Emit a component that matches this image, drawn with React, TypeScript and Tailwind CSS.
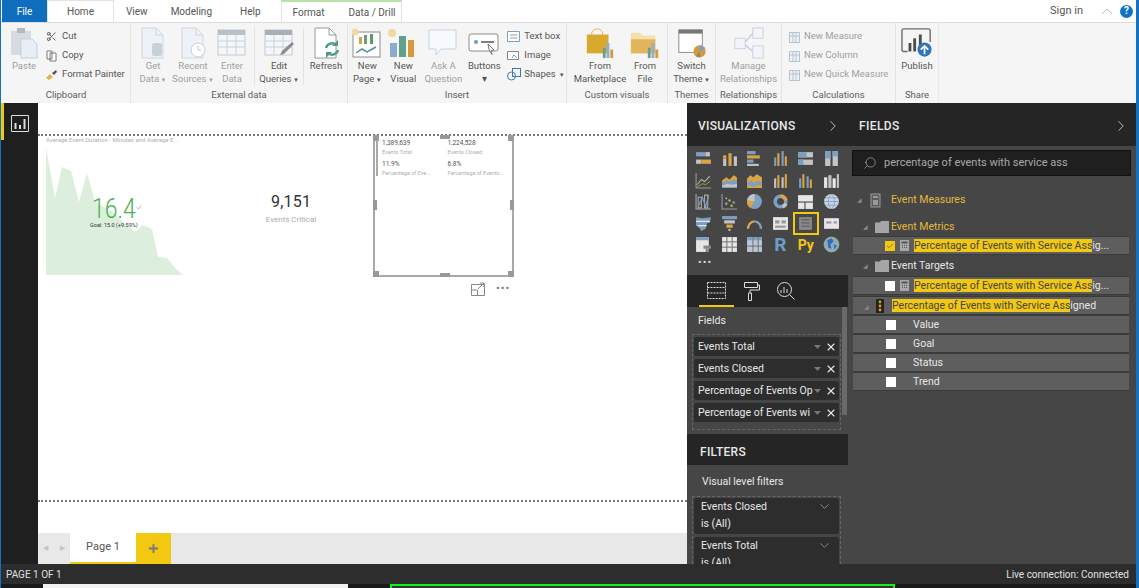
import React from 'react';
import { Check, ChevronDown, ChevronRight, Plus, Scissors, Search, X } from 'lucide-react';

const G = '#d9a441';
const B = '#7f9fc2';
const L = '#c4c4c4';
const W = '#e6e6e6';

type R = [number, number, number, number, string];

const bars: Record<string, R[]> = {
  a: [[1, 2, 9, 4, B], [10, 2, 4, 4, L], [1, 9, 5, 4, L], [6, 9, 9, 4, G]],
  b: [[2, 8, 3, 7, L], [2, 5, 3, 3, G], [7, 3, 3, 12, G], [12, 6, 3, 9, L]],
  c: [[1, 1, 8, 3, B], [1, 5, 12, 3, G], [1, 9, 6, 3, B], [1, 13, 11, 2, L]],
  d: [[2, 7, 2, 8, B], [5, 3, 2, 12, G], [9, 1, 2, 14, B], [12, 6, 2, 9, G]],
  e: [[1, 2, 14, 5, L], [1, 2, 8, 5, B], [1, 9, 14, 5, L], [1, 9, 5, 5, B]],
  f: [[2, 1, 5, 14, L], [2, 1, 5, 7, B], [9, 1, 5, 14, L], [9, 1, 5, 5, B]],
  h: [[2, 6, 2, 9, L], [5, 3, 2, 12, G], [9, 5, 2, 10, L], [12, 2, 2, 13, G]],
  i: [[2, 6, 2, 9, B], [5, 2, 2, 13, G], [9, 4, 2, 11, B], [12, 7, 2, 8, G]],
  j: [[1, 5, 3, 10, W], [5, 3, 3, 12, L], [9, 6, 3, 9, W], [13, 2, 2, 13, L]],
  k: [[1, 2, 14, 6, W], [1, 9, 6, 6, W], [8, 9, 7, 6, W]],
  l: [[1, 1, 14, 3, B], [3, 5, 10, 3, L], [5, 9, 6, 3, G], [7, 13, 2, 2, L]],
  m: [[1, 2, 14, 12, W], [3, 5, 4, 3, '#999'], [9, 5, 4, 3, '#999'], [3, 10, 10, 2, '#999']],
  n: [[2, 2, 12, 12, '#8a8a8a'], [4, 4, 8, 1, '#5a5a5a'], [4, 7, 8, 1, '#5a5a5a'], [4, 10, 8, 1, '#5a5a5a']],
  o: [[1, 3, 14, 10, W], [3, 6, 5, 2, '#999'], [10, 6, 3, 2, B]],
  p: [[1, 1, 12, 14, W], [1, 1, 12, 3, B], [8, 9, 7, 3, '#888'], [10, 12, 3, 3, '#888']],
  q: [[1, 1, 14, 14, W], [5, 1, 1, 14, '#777'], [10, 1, 1, 14, '#777'], [1, 5, 14, 1, '#777'], [1, 10, 14, 1, '#777']],
  r: [[1, 1, 14, 14, '#b9c7d6'], [1, 1, 14, 3, B], [6, 1, 1, 14, '#777'], [11, 1, 1, 14, '#777'], [1, 9, 14, 1, '#777']],
};

const VizBars = ({ name }: { name: string }) => (
  <svg width="17" height="17" viewBox="0 0 16 16">
    {bars[name].map(([x, y, w, h, c], i) => (
      <rect key={i} x={x} y={y} width={w} height={h} fill={c} />
    ))}
  </svg>
);

const VizShape = ({ children }: { children: React.ReactNode }) => (
  <svg width="17" height="17" viewBox="0 0 16 16" fill="none">
    {children}
  </svg>
);

const vizIcons: React.ReactNode[] = [
  <VizBars name="a" />,
  <VizBars name="b" />,
  <VizBars name="c" />,
  <VizBars name="d" />,
  <VizBars name="e" />,
  <VizBars name="f" />,
  <VizShape>
    <path d="M1 1v14h14" stroke="#999" />
    <path d="M2 12l4-5 3 2 5-5" stroke="#b0b0b0" />
    <path d="M2 14l5-3 3 1 4-3" stroke={G} strokeWidth=".7" />
  </VizShape>,
  <VizShape>
    <path d="M1 8l4-3 3 2 4-4 3 2v10H1z" fill={G} />
    <path d="M1 10l4-2 4 1 3-2 3 1v7H1z" fill={B} />
    <path d="M1 13l5-2 4 1 5-1v3H1z" fill={L} />
  </VizShape>,
  <VizShape>
    <path d="M1 6l3-3 3 2 3-3 5 3v10H1z" fill={G} />
    <path d="M1 10l4-2 3 2 3-2 4 2v3l-4-1-4 2-6-2z" fill={B} />
  </VizShape>,
  <VizBars name="h" />,
  <VizBars name="i" />,
  <VizBars name="j" />,
  <VizShape>
    <path d="M1 1v14h14" stroke="#aaa" />
    <path d="M3 4h3v10H3zM9 2h3v12H9z" stroke="#aaa" />
    <path d="M3 13l4-9 3 9 3-11" stroke={B} />
  </VizShape>,
  <VizShape>
    <path d="M1 1v14h14" stroke="#999" />
    <circle cx="5" cy="10" r="1.2" fill={B} />
    <circle cx="8" cy="7" r="1.2" fill={G} />
    <circle cx="12" cy="9" r="1.2" fill={B} />
    <circle cx="10" cy="12" r="1.2" fill={G} />
    <circle cx="5" cy="5" r=".8" fill={L} />
  </VizShape>,
  <VizShape>
    <circle cx="8" cy="8" r="7" fill={B} />
    <path d="M8 8V1a7 7 0 0 0-7 6z" fill={L} />
    <path d="M8 8L1 7a7 7 0 0 0 3 7z" fill={G} />
  </VizShape>,
  <VizShape>
    <circle cx="8" cy="8" r="5" stroke={B} strokeWidth="3.4" />
    <path d="M8 3a5 5 0 0 1 5 4" stroke={G} strokeWidth="3.4" />
    <path d="M13 10a5 5 0 0 1-3 3" stroke={L} strokeWidth="3.4" />
  </VizShape>,
  <VizBars name="k" />,
  <VizShape>
    <circle cx="8" cy="8" r="7" fill="#c9d4e0" />
    <path d="M1 8h14M8 1c-4 4-4 10 0 14M8 1c4 4 4 10 0 14M2 4.500h12M2 11.500h12" stroke={B} strokeWidth=".8" />
  </VizShape>,
  <VizShape>
    <path d="M1 2l6 1 8-1-1 5-3 1-1 5-4 2-2-3-3-2z" fill={B} />
    <path d="M1 6h13M3 10h8" stroke={W} strokeWidth="1" />
  </VizShape>,
  <VizBars name="l" />,
  <VizShape>
    <path d="M2 13a6.500 6.500 0 0 1 6-7" stroke={G} strokeWidth="2.200" />
    <path d="M8 6a6.500 6.500 0 0 1 6 7" stroke={B} strokeWidth="2.200" />
  </VizShape>,
  <VizBars name="m" />,
  <VizBars name="n" />,
  <VizBars name="o" />,
  <VizBars name="p" />,
  <VizBars name="q" />,
  <VizBars name="r" />,
  <span className="text-[19px] leading-none font-bold text-[#6f9bc8]">R</span>,
  <span className="text-[14px] leading-none font-bold text-[#f2c811]">Py</span>,
  <VizShape>
    <circle cx="8" cy="8" r="7" fill="#8fa9c4" />
    <path d="M4 4l4-2 2 3-3 3 1 4-3-1zM10 8l3 1-2 4z" fill="#2f6fb3" />
    <circle cx="8" cy="8" r="7" stroke="#9bb86f" strokeWidth=".8" />
  </VizShape>,
];

const Doc = ({ children, faded = true }: { children?: React.ReactNode; faded?: boolean }) => (
  <svg width="34" height="32" viewBox="0 0 34 32" fill="none">
    <path
      d="M6 1h14l7 7v23H6z"
      fill={faded ? '#eef2f7' : '#fff'}
      stroke={faded ? '#cfd6e0' : '#9a9a9a'}
    />
    <path d="M20 1v7h7" stroke={faded ? '#cfd6e0' : '#9a9a9a'} />
    {children}
  </svg>
);

const GridIcon = ({ pen = false }: { pen?: boolean }) => (
  <svg width="34" height="32" viewBox="0 0 34 32" fill="none">
    <rect x="3" y="3" width="27" height="25" fill="#f4f6f9" stroke="#c2c9d2" />
    <rect x="3" y="3" width="27" height="5" fill={pen ? '#a9b0b9' : '#b8c0ca'} />
    <path d="M3 14h27M3 20h27M12 8v20M21 8v20" stroke="#cbd2da" />
    {pen && <path d="M18 28l2-4 10-9 2 2-10 10z" fill="#8d8d8d" />}
  </svg>
);

const ribbonIcons: Record<string, React.ReactNode> = {
  paste: (
    <svg width="30" height="32" viewBox="0 0 30 32" fill="none">
      <rect x="2" y="4" width="20" height="24" fill="#d7dbe1" />
      <rect x="8" y="1" width="8" height="5" fill="#b5b9bf" />
      <path d="M12 12h11l5 5v14H12z" fill="#e8eef6" stroke="#c4cfdd" />
    </svg>
  ),
  get: (
    <Doc>
      <rect x="16" y="16" width="10" height="13" rx="2" fill="#c8d0d9" />
    </Doc>
  ),
  recent: (
    <Doc>
      <circle cx="22" cy="23" r="7" fill="#fff" stroke="#c4cedb" />
      <path d="M22 19v4h3" stroke="#b9c4d1" />
    </Doc>
  ),
  enter: <GridIcon />,
  edit: <GridIcon pen />,
  refresh: (
    <Doc faded={false}>
      <path d="M17 21a6 6 0 0 1 10-3M29 23a6 6 0 0 1-10 3" stroke="#4d9c8a" strokeWidth="2.400" />
      <path d="M29 13v6h-6zM17 31v-6h6z" fill="#4d9c8a" />
    </Doc>
  ),
  page: (
    <svg width="34" height="32" viewBox="0 0 34 32" fill="none">
      <rect x="3" y="5" width="27" height="25" fill="#fff" stroke="#8d8d8d" />
      <rect x="9" y="10" width="3" height="7" fill={G} />
      <rect x="14" y="8" width="3" height="9" fill="#6f9a83" />
      <rect x="20" y="7" width="3" height="10" fill="#5c9a66" />
      <path d="M6 26l6-4 5 3 9-5" stroke="#5b8a9e" strokeWidth="1.500" />
      <circle cx="5" cy="5" r="3.500" fill="#f3d9a0" />
    </svg>
  ),
  visual: (
    <svg width="34" height="32" viewBox="0 0 34 32" fill="none">
      <rect x="4" y="16" width="7" height="14" fill="#8caccb" />
      <rect x="13" y="9" width="7" height="21" fill="#5f9f8d" />
      <rect x="22" y="13" width="6" height="17" fill="#d79a3a" />
      <circle cx="6" cy="6" r="4" fill="#f3d9a0" />
    </svg>
  ),
  ask: (
    <svg width="34" height="32" viewBox="0 0 34 32" fill="none">
      <path d="M3 3h27v19H15l-5 6v-6H3z" fill="#f6f9fd" stroke="#c8d3e0" />
    </svg>
  ),
  buttons: (
    <svg width="34" height="32" viewBox="0 0 34 32" fill="none">
      <rect x="2" y="7" width="29" height="17" rx="2" fill="#fff" stroke="#8c8c8c" />
      <circle cx="9" cy="15" r="2" fill="#6f9bc8" />
      <path d="M14 15h13" stroke="#555" strokeWidth="1.500" />
      <path d="M21 17l6 6-3 .5 1 4-3-5z" fill="#fff" stroke="#777" />
    </svg>
  ),
  market: (
    <svg width="34" height="32" viewBox="0 0 34 34" fill="none">
      <path d="M8 8c0-8 12-8 12 0" stroke="#e0b34c" />
      <path d="M3 8h23v20H3z" fill="#d9a92f" />
      <rect x="20" y="22" width="3" height="11" fill="#6e9e8b" />
      <rect x="24" y="17" width="3" height="16" fill="#8fb0cc" />
      <rect x="28" y="24" width="3" height="9" fill="#d79a3a" />
    </svg>
  ),
  file: (
    <svg width="34" height="32" viewBox="0 0 34 34" fill="none">
      <path d="M2 6h10l3 3h13v19H2z" fill="#f4dfae" />
      <path d="M2 13h26v15H2z" fill="#e3b65c" />
      <rect x="20" y="22" width="3" height="11" fill="#6e9e8b" />
      <rect x="24" y="17" width="3" height="16" fill="#8fb0cc" />
      <rect x="28" y="24" width="3" height="9" fill="#d79a3a" />
    </svg>
  ),
  theme: (
    <svg width="34" height="32" viewBox="0 0 34 34" fill="none">
      <rect x="3" y="3" width="25" height="24" fill="#fff" stroke="#8a8a8a" />
      <rect x="3" y="3" width="25" height="4" fill="#777" />
      <circle cx="25" cy="26" r="6.500" fill="#d79a3a" />
      <path d="M25 26v-6.500a6.500 6.500 0 0 1 6 4z" fill="#7f9fc2" />
      <path d="M25 26l-4 5a6.500 6.500 0 0 0 5 1z" fill="#7d8f86" />
    </svg>
  ),
  manage: (
    <svg width="34" height="32" viewBox="0 0 36 34" fill="none">
      <rect x="3" y="12" width="11" height="11" fill="#f1f4f8" stroke="#c9d2dd" />
      <rect x="22" y="1" width="11" height="11" fill="#f1f4f8" stroke="#c9d2dd" />
      <rect x="22" y="20" width="11" height="13" fill="#f1f4f8" stroke="#c9d2dd" />
      <path d="M14 16l8-9M14 19l8 7" stroke="#bcd0e4" strokeWidth="1.500" />
    </svg>
  ),
  publish: (
    <svg width="32" height="32" viewBox="0 0 34 34" fill="none">
      <path d="M7 26H3a2 2 0 0 1-2-2V4a2 2 0 0 1 2-2h26a2 2 0 0 1 2 2v12" stroke="#6d6d6d" strokeWidth="1.500" />
      <rect x="8" y="17" width="3" height="9" fill="#4d4d4d" />
      <rect x="13" y="12" width="3" height="14" fill="#4d4d4d" />
      <rect x="19" y="8" width="3" height="14" fill="#4d4d4d" />
      <circle cx="25" cy="24" r="7.500" fill="#2f76b8" />
      <path d="M25 29v-9M21 24l4-4 4 4" stroke="#fff" strokeWidth="1.800" />
    </svg>
  ),
};

const Large = ({
  icon,
  label,
  caret = false,
  faded = false,
  w,
}: {
  icon: string;
  label: string[];
  caret?: boolean;
  faded?: boolean;
  w: string;
}) => (
  <div className={`flex shrink-0 flex-col items-center ${w}`}>
    <div className="flex h-[33px] items-start justify-center">{ribbonIcons[icon]}</div>
    <div
      className={`text-center text-[9.500px] leading-[12.5px] whitespace-nowrap ${faded ? 'text-[#a0a0a0]' : 'text-[#555]'}`}
    >
      {label.map((line, i) => (
        <div key={line}>
          {line}
          {caret && i === label.length - 1 && <span className="text-[6px]"> ▼</span>}
        </div>
      ))}
    </div>
  </div>
);

const Small = ({
  icon,
  label,
  faded = false,
}: {
  icon: React.ReactNode;
  label: React.ReactNode;
  faded?: boolean;
}) => (
  <div
    className={`flex h-[19px] items-center gap-[3px] text-[9.500px] whitespace-nowrap ${faded ? 'text-[#a0a0a0]' : 'text-[#555]'}`}
  >
    <span className="flex w-[15px] shrink-0 justify-center">{icon}</span>
    {label}
  </div>
);

const Group = ({
  title,
  w,
  children,
  left = false,
}: {
  title: string;
  w: string;
  children: React.ReactNode;
  left?: boolean;
}) => (
  <div className={`flex h-full shrink-0 flex-col border-r border-[#e4e4e4] ${w}`}>
    <div className={`flex h-[66px] items-start pt-[4px] ${left ? 'justify-start' : 'justify-center'}`}>{children}</div>
    <div className="text-center text-[9.500px] leading-[12px] text-[#606060]">{title}</div>
  </div>
);

const Ribbon = () => (
  <div className="flex h-[81px] shrink-0 border-t border-[#dcdcdc] bg-[#f5f5f5] pl-px">
    <Group title="Clipboard" w="w-[129px]" left>
      <div className="ml-[7px] flex gap-[5px]">
        <Large icon="paste" label={['Paste']} faded w="w-[30px]" />
        <div className="flex flex-col">
          <Small icon={<Scissors size={11} className="text-[#555]" />} label="Cut" />
          <Small
            icon={
              <svg width="11" height="12" viewBox="0 0 11 12" fill="none" stroke="#777">
                <path d="M1 1h5v8H1zM4 3h6v8H4z" fill="#fff" />
              </svg>
            }
            label="Copy"
          />
          <Small
            icon={
              <svg width="13" height="11" viewBox="0 0 13 11">
                <path d="M1 9l4-4 3 3-4 3z" fill="#e0b34c" />
                <path d="M7 4l4-3 1 2-3 3z" fill="#555" />
              </svg>
            }
            label="Format Painter"
          />
        </div>
      </div>
    </Group>
    <Group title="External data" w="w-[217px]">
      <div className="flex">
        <Large icon="get" label={['Get', 'Data']} caret faded w="w-[40px]" />
        <Large icon="recent" label={['Recent', 'Sources']} caret faded w="w-[40px]" />
        <Large icon="enter" label={['Enter', 'Data']} faded w="w-[38px]" />
        <div className="mx-[3px] h-[58px] border-l border-[#e2e2e2]" />
        <Large icon="edit" label={['Edit', 'Queries']} caret w="w-[42px]" />
        <div className="mx-[3px] h-[58px] border-l border-[#e2e2e2]" />
        <Large icon="refresh" label={['Refresh']} w="w-[38px]" />
      </div>
    </Group>
    <Group title="Insert" w="w-[219px]">
      <div className="flex">
        <Large icon="page" label={['New', 'Page']} caret w="w-[36px]" />
        <Large icon="visual" label={['New', 'Visual']} w="w-[36px]" />
        <Large icon="ask" label={['Ask A', 'Question']} faded w="w-[44px]" />
        <Large icon="buttons" label={['Buttons', '▾']} w="w-[38px]" />
        <div className="ml-[3px] flex flex-col">
          <Small
            icon={
              <svg width="13" height="11" viewBox="0 0 13 11" fill="#fff" stroke="#7f9fc2">
                <path d="M.5.500h12v10H.500z" />
                <path d="M3 4h7M3 7h7" stroke="#999" />
              </svg>
            }
            label="Text box"
          />
          <Small
            icon={
              <svg width="14" height="13" viewBox="0 0 14 13" fill="#fff" stroke="#888">
                <path d="M.5 2.500h11v8H.500z" />
                <path d="M5 9l2-3 3 3" stroke="#7f9fc2" />
              </svg>
            }
            label="Image"
          />
          <Small
            icon={
              <svg width="14" height="13" viewBox="0 0 14 13" fill="none" stroke="#3f78b5">
                <rect x="5.500" y=".5" width="8" height="8" />
                <circle cx="4.500" cy="8" r="4" />
              </svg>
            }
            label={
              <>
                Shapes <span className="text-[6px]">▼</span>
              </>
            }
          />
        </div>
      </div>
    </Group>
    <Group title="Custom visuals" w="w-[101px]">
      <div className="flex">
        <Large icon="market" label={['From', 'Marketplace']} w="w-[56px]" />
        <Large icon="file" label={['From', 'File']} w="w-[34px]" />
      </div>
    </Group>
    <Group title="Themes" w="w-[48px]">
      <Large icon="theme" label={['Switch', 'Theme']} caret w="w-[42px]" />
    </Group>
    <Group title="Relationships" w="w-[66px]">
      <Large icon="manage" label={['Manage', 'Relationships']} faded w="w-[60px]" />
    </Group>
    <Group title="Calculations" w="w-[114px]" left>
      <div className="ml-[4px] flex flex-col">
        {['New Measure', 'New Column', 'New Quick Measure'].map((t) => (
          <Small
            key={t}
            faded
            icon={
              <svg width="14" height="13" viewBox="0 0 14 13" fill="#eef2f7" stroke="#b7c2cf">
                <path d="M2.500 2.500h10v10h-10z" />
                <path d="M2.500 6h10M6 2.500v10M9 2.500v10" />
              </svg>
            }
            label={t}
          />
        ))}
      </div>
    </Group>
    <div className="w-[43px] shrink-0 border-r border-[#e9e9e9]">
      <div className="flex h-[66px] items-start justify-center pt-[4px]">
        <Large icon="publish" label={['Publish']} w="w-[40px]" />
      </div>
      <div className="text-center text-[9.500px] leading-[12px] text-[#606060]">Share</div>
    </div>
  </div>
);

const TabBar = () => (
  <div className="flex h-[22px] shrink-0 items-stretch bg-white pl-px text-[10px] text-[#555]">
    <div className="flex w-[45px] items-center justify-center bg-[#106ebe] text-white">File</div>
    <div className="flex w-[67px] items-center justify-center border-x border-t border-[#e3e3e3]">Home</div>
    <div className="ml-[12px] flex items-center">View</div>
    <div className="ml-[23px] flex items-center">Modeling</div>
    <div className="ml-[28px] flex items-center">Help</div>
    <div className="ml-[20px] flex w-[121px] items-center gap-[24px] border-x border-t-2 border-[#e3e3e3] border-t-[#b9e3a6] pl-[11px]">
      <span>Format</span>
      <span>Data / Drill</span>
    </div>
    <div className="ml-auto flex items-center pr-[3px]">
      <span className="text-[11px]">Sign in</span>
      <svg className="ml-[18px]" width="12" height="8" viewBox="0 0 12 8" fill="none" stroke="#bbb">
        <path d="M1 7l5-5 5 5" />
      </svg>
      <span className="ml-[7px] flex h-[13px] w-[13px] items-center justify-center rounded-full bg-[#1273c4] text-[10px] leading-none font-bold text-white">
        ?
      </span>
    </div>
  </div>
);

const Handle = ({ className }: { className: string }) => (
  <div className={`absolute bg-[#999] ${className}`} />
);

const ReportCanvas = () => (
  <div className="relative min-w-0 flex-1 bg-white">
    <div className="absolute inset-x-0 top-[31px] border-t-2 border-dotted border-[#777]" />
    <div className="absolute inset-x-0 top-[397px] border-t-2 border-dotted border-[#777]" />

    <div className="absolute top-[33px] left-[8px] w-[140px] truncate text-[6px] leading-[8px] text-[#b0b0b0]">
      Average Event Duration - Minutes and Average E...
    </div>
    <svg className="absolute top-[45px] left-[8px]" width="137" height="128" viewBox="46 148 137 128">
      <path
        d="M46 148L55 198 62 167 71 171 79 202 87 173 95 202 113 212 123 222 135 232 143 225 152 229 158 257 167 258 175 268 183 275H46z"
        fill="#dcefdd"
      />
    </svg>
    <div className="absolute top-[94px] left-[54px] origin-left scale-x-[.85] text-[27px] leading-[24px] font-light text-[#4caf50]">
      16.4
      <Check size={7} className="absolute top-[7px] -right-[8px] text-[#777]" />
    </div>
    <div className="absolute top-[118px] left-[52px] text-[5.500px] leading-[8px] whitespace-nowrap text-[#333]">
      Goal: 15.0 (+9.59%)
    </div>
    <div className="absolute top-[87px] left-[233px] w-[40px] text-center text-[16px] leading-[24px] tracking-[.2px] text-[#333]">
      9,151
    </div>
    <div className="absolute top-[111px] left-[223px] w-[60px] text-center text-[8px] leading-[12px] whitespace-nowrap text-[#aaa]">
      Events Critical
    </div>

    <div className="absolute top-[32px] left-[335px] h-[142px] w-[141px] border-x-2 border-b-2 border-[#a8a8a8]">
      <Handle className="top-0 -left-[2px] h-[6px] w-[6px]" />
      <Handle className="top-0 -right-[2px] h-[6px] w-[6px]" />
      <Handle className="-bottom-[2px] -left-[2px] h-[6px] w-[6px]" />
      <Handle className="-right-[2px] -bottom-[2px] h-[6px] w-[6px]" />
      <Handle className="top-[65px] -left-[2px] h-[10px] w-[4px]" />
      <Handle className="top-[65px] -right-[2px] h-[10px] w-[4px]" />
      <Handle className="top-0 left-[65px] h-[4px] w-[10px]" />
      <Handle className="-bottom-[2px] left-[65px] h-[4px] w-[10px]" />
      <div className="absolute top-[5px] left-[1px] h-[36px] w-[2px] bg-[#aaa]" />
      <div className="absolute top-[4px] left-[7px] grid w-[130px] grid-cols-2 gap-x-[1px] leading-[9px] whitespace-nowrap">
        {[
          ['1,389,639', 'Events Total'],
          ['1,224,528', 'Events Closed'],
          ['11.9%', 'Percentage of Eve...'],
          ['6.8%', 'Percentage of Events ...'],
        ].map(([v, t]) => (
          <div key={t} className="mb-[3px]">
            <div className="text-[6.500px] text-[#555]">{v}</div>
            <div className="text-[5.500px] text-[#b0b0b0]">{t}</div>
          </div>
        ))}
      </div>
    </div>
    <svg className="absolute top-[179px] left-[433px]" width="14" height="14" viewBox="0 0 14 14" fill="none" stroke="#888">
      <path d="M.5 2.500h13v11H.500zM.5 8h6v5.500M7 7l6-6M9 1h4v4" />
    </svg>
    <div className="absolute top-[179px] left-[458px] text-[11px] leading-[14px] tracking-[1px] text-[#777]">•••</div>

    <div className="absolute inset-x-0 bottom-0 flex h-[31px] bg-[#e8e8e8]">
      <div className="flex w-[32px] items-center justify-between px-[5px] text-[7px] text-[#c4c4c4]">
        <span>◀</span>
        <span>▶</span>
      </div>
      <div className="flex w-[66px] items-center justify-center border-b-2 border-[#f2c811] bg-white text-[11px] text-[#555]">
        Page 1
      </div>
      <div className="flex w-[35px] items-center justify-center bg-[#f2c811]">
        <Plus size={13} strokeWidth={3.500} className="text-[#777]" />
      </div>
    </div>
  </div>
);

const VizPanel = () => (
  <div className="flex w-[161px] shrink-0 flex-col bg-[#252525] text-[#e8e8e8]">
    <div className="flex h-[43px] shrink-0 items-center justify-between pt-[3px] pr-[6px] pl-[11px]">
      <span className="text-[12px] font-medium tracking-[.3px]">VISUALIZATIONS</span>
      <ChevronRight size={18} strokeWidth={1.200} className="text-[#ccc]" />
    </div>
    <div className="h-[129px] shrink-0 bg-[#464646] px-[4px] pt-[2px]">
      <div className="grid grid-cols-6 gap-x-0">
        {vizIcons.map((icon, i) => (
          <div
            key={i}
            className={`mx-auto flex h-[21.500px] w-[24px] items-center justify-center ${i === 22 ? 'outline-2 -outline-offset-1 outline-[#f2c811]' : ''}`}
          >
            {icon}
          </div>
        ))}
      </div>
      <div className="ml-[7px] text-[11px] leading-[14px] tracking-[1px] text-[#d8d8d8]">•••</div>
    </div>
    <div className="flex h-[32px] shrink-0 items-center pl-[12px]">
      <div className="relative flex h-full w-[35px] items-center justify-center border-b-2 border-[#f2c811]">
        <svg width="19" height="17" viewBox="0 0 19 17" fill="none" stroke="#ddd" strokeDasharray="2 1">
          <path d="M.5.500h18v16H.500zM.5 5.500h18M.5 11h18" />
        </svg>
      </div>
      <svg className="ml-[10px]" width="16" height="20" viewBox="0 0 16 20" fill="none" stroke="#ddd">
        <path d="M.5 1.500h13v5H.500zM13.500 4h2v5H6v3M4.500 12h3v7.500h-3z" />
      </svg>
      <svg className="ml-[17px]" width="18" height="18" viewBox="0 0 18 18" fill="none" stroke="#ddd">
        <circle cx="7.500" cy="7.500" r="7" />
        <path d="M12.500 12.500l5 5M4 11V8M7 11V5M10 11V7" />
      </svg>
    </div>
    <div className="relative h-[127px] shrink-0 bg-[#464646] pt-[6px] pl-[5px]">
      <div className="ml-[6px] text-[10.500px] leading-[16px]">Fields</div>
      <div className="mt-[5px] flex w-[149px] flex-col gap-[3px] border border-dashed border-[#666] px-[1px] py-[2px] pb-[7px]">
        {['Events Total', 'Events Closed', 'Percentage of Events Op', 'Percentage of Events wi'].map((t) => (
          <div key={t} className="flex h-[19px] items-center rounded-[2px] bg-[#2d2d2d] pr-[3px] pl-[4px] text-[10.500px]">
            <span className="w-[116px] shrink-0 whitespace-nowrap">{t}</span>
            <svg className="mr-[4px] shrink-0" width="7" height="4" viewBox="0 0 7 4">
              <path d="M0 0h7L3.500 4z" fill="#777" />
            </svg>
            <X size={12} strokeWidth={2.200} className="shrink-0 text-[#e8e8e8]" />
          </div>
        ))}
      </div>
      <div className="absolute top-0 right-[1px] h-[108px] w-[5px] bg-[#6a6a6a]" />
    </div>
    <div className="flex h-[31px] shrink-0 items-center pt-[5px] pl-[13px] text-[12px] font-medium tracking-[.3px]">FILTERS</div>
    <div className="min-h-0 flex-1 overflow-hidden bg-[#464646] pt-[9px] pl-[5px]">
      <div className="ml-[10px] text-[10.500px] leading-[16px]">Visual level filters</div>
      <div className="mt-[6px] flex w-[149px] flex-col gap-[3px] border border-dashed border-[#666] px-[1px] pt-[1px]">
        {['Events Closed', 'Events Total'].map((t) => (
          <div key={t} className="relative h-[36px] shrink-0 rounded-[3px] bg-[#2d2d2d] pt-[1px] pl-[7px] text-[10.500px] leading-[16.500px]">
            <div>{t}</div>
            <div>is (All)</div>
            <ChevronDown size={15} strokeWidth={1} className="absolute top-[1px] right-[7px] text-[#bbb]" />
          </div>
        ))}
      </div>
    </div>
  </div>
);

const Mark = ({ before, after }: { before: string; after?: string }) => (
  <span className="whitespace-nowrap">
    <span className="bg-[#f2c811] text-[#444]">{before}</span>
    {after}
  </span>
);

const Box = ({ on = false }: { on?: boolean }) => (
  <span className={`flex h-[10px] w-[10px] shrink-0 items-center justify-center ${on ? 'bg-[#f2c811]' : 'bg-white'}`}>
    {on && <Check size={8} strokeWidth={2} className="text-[#555]" />}
  </span>
);

const Calc = () => (
  <svg className="shrink-0" width="9" height="11" viewBox="0 0 9 11">
    <rect width="9" height="11" fill="#a8a8a8" />
    <rect x="1.500" y="1.500" width="6" height="2" fill="#555" />
    <path d="M2 5h1v1H2zM4 5h1v1H4zM6 5h1v1H6zM2 7h1v1H2zM4 7h1v1H4zM6 7h1v1H6z" fill="#555" />
  </svg>
);

const Folder = () => (
  <svg className="shrink-0" width="14" height="12" viewBox="0 0 14 12">
    <path d="M0 1.500h5L6 0h8v12H0z" fill="#a5a5a5" />
  </svg>
);

const Tri = () => <span className="w-[7px] shrink-0 text-[6px] leading-none text-[#888]">◢</span>;

const Row = ({ children, gap = false }: { children: React.ReactNode; gap?: boolean }) => (
  <div className={`flex h-[19px] shrink-0 items-center rounded-[1px] border-y border-[#3a3a3a] bg-[#5e5e5e] text-[10.500px] ${gap ? 'mb-[1px]' : ''}`}>
    {children}
  </div>
);

const FieldsPanel = () => (
  <div className="flex w-[288px] shrink-0 flex-col bg-[#252525] text-[#e8e8e8]">
    <div className="flex h-[43px] shrink-0 items-center justify-between pt-[3px] pr-[6px] pl-[11px]">
      <span className="text-[12px] font-medium tracking-[.4px]">FIELDS</span>
      <ChevronRight size={18} strokeWidth={1.200} className="text-[#ccc]" />
    </div>
    <div className="min-h-0 flex-1 bg-[#464646] pt-[4px] pr-[5px] pl-[4px]">
      <div className="flex h-[26px] items-center gap-[7px] border border-[#111] bg-[#1f1f1f] pl-[10px] text-[11px] text-[#a8a8a8]">
        <Search size={14} strokeWidth={1.200} className="-scale-x-100 text-[#aaa]" />
        percentage of events with service ass
      </div>
      <div className="mr-[2px] ml-px">
        <div className="mt-[15px] flex h-[18px] items-center pl-[4px] text-[10.500px] text-[#e3b93c]">
          <Tri />
          <svg className="mr-[10px] ml-[6px]" width="11" height="15" viewBox="0 0 11 15">
            <rect x="1" y="1" width="9" height="13" fill="#5a5a5a" stroke="#999" />
            <rect x="3" y="3" width="5" height="2" fill="#999" />
            <rect x="3" y="7" width="5" height="5" fill="#999" />
          </svg>
          Event Measures
        </div>
        <div className="mt-[9px] flex h-[18px] items-center gap-[2px] pl-[10px] text-[10.500px] text-[#e3b93c]">
          <Tri />
          <span className="ml-[3px]"><Folder /></span>
          Event Metrics
        </div>
        <Row>
          <span className="ml-[32px]"><Box on /></span>
          <span className="mr-[5px] ml-[5px]"><Calc /></span>
          <Mark before="Percentage of Events with Service Ass" after="ig..." />
        </Row>
        <div className="mt-[1px] flex h-[20px] items-center gap-[2px] pl-[10px] text-[10.500px]">
          <Tri />
          <span className="ml-[3px]"><Folder /></span>
          Event Targets
        </div>
        <Row gap>
          <span className="ml-[32px]"><Box /></span>
          <span className="mr-[5px] ml-[5px]"><Calc /></span>
          <Mark before="Percentage of Events with Service Ass" after="ig..." />
        </Row>
        <Row>
          <span className="ml-[11px]"><Tri /></span>
          <svg className="mr-[8px] ml-[7px] shrink-0" width="8" height="14" viewBox="0 0 8 14">
            <rect width="8" height="14" rx="1" fill="#222" />
            <circle cx="4" cy="3" r="1.400" fill="#d8a028" />
            <circle cx="4" cy="7" r="1.400" fill="#d8a028" />
            <circle cx="4" cy="11" r="1.400" fill="#d8a028" />
          </svg>
          <Mark before="Percentage of Events with Service Ass" after="igned" />
        </Row>
        {['Value', 'Goal', 'Status', 'Trend'].map((t) => (
          <Row key={t}>
            <span className="ml-[33px] w-[27px]"><Box /></span>
            {t}
          </Row>
        ))}
      </div>
    </div>
  </div>
);

export default function App() {
  return (
    <div className="flex h-[588px] w-[1139px] flex-col overflow-hidden border-r-[3px] border-l border-r-[#1273c4] border-l-[#1273c4] bg-white font-['Roboto','Noto_Sans',sans-serif]">
      <TabBar />
      <Ribbon />
      <div className="flex min-h-0 flex-1">
        <div className="relative w-[37px] shrink-0 bg-[#1f1f1f] pt-[12px] pl-[10px]">
          <div className="absolute top-0 left-0 h-[37px] w-[3px] bg-[#f2c811]" />
          <svg width="18" height="17" viewBox="0 0 18 17" fill="none" stroke="#ddd">
            <path d="M.5.500h17v16H.500z" />
            <path d="M4.500 14V8M9 14V10M13.500 14V4" strokeWidth="2" />
          </svg>
        </div>
        <ReportCanvas />
        <VizPanel />
        <FieldsPanel />
      </div>
      <div className="flex h-[20px] shrink-0 items-center justify-between bg-[#2d2d2d] pr-[7px] pl-[5px] text-[10px] text-[#e0e0e0]">
        <span>PAGE 1 OF 1</span>
        <span>Live connection: Connected</span>
      </div>
      <div className="flex h-[4px] shrink-0 bg-[#1a1a1a]">
        <div className="ml-[42px] w-[305px] bg-[#f2f2f2]" />
        <div className="ml-[42px] w-[505px] border-x-2 border-t-2 border-[#12f01e] bg-[#333]" />
      </div>
    </div>
  );
}
